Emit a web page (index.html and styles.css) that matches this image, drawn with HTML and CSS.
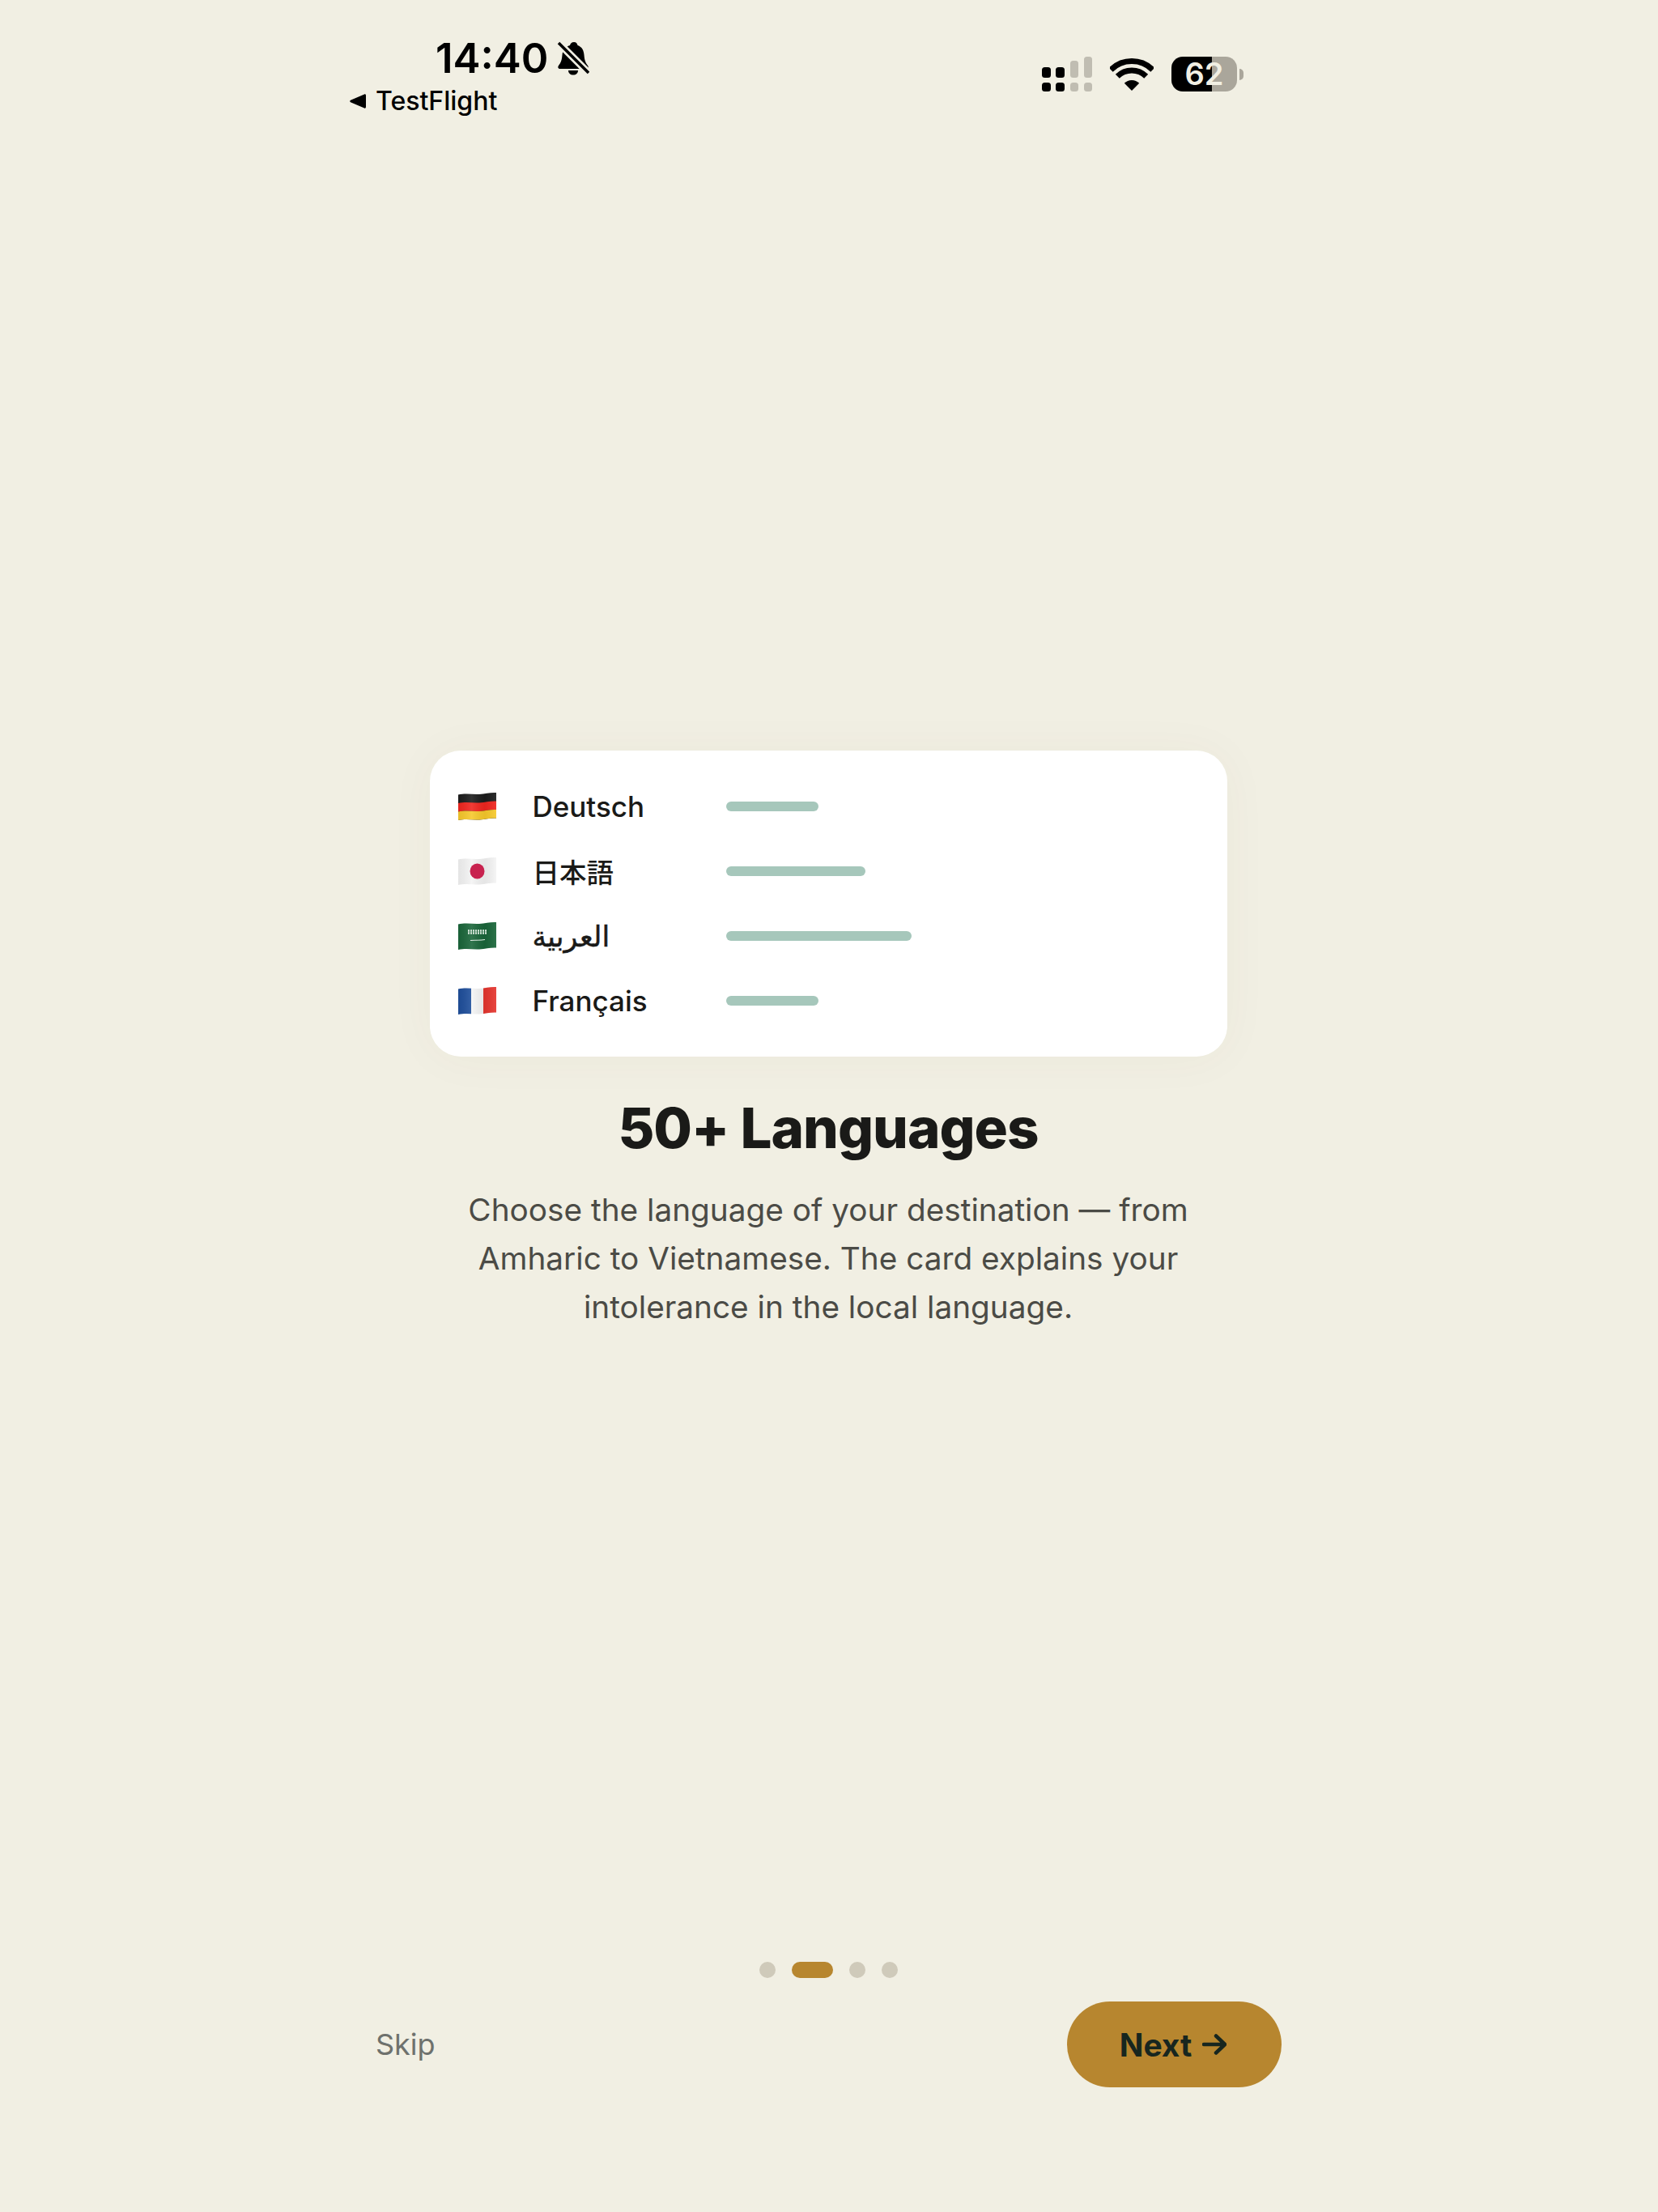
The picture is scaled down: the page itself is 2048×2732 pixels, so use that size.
FILE: index.html
```html
<!DOCTYPE html>
<html>
    <head>
        <meta charset="utf-8">
        <link rel="stylesheet" href="styles.css">
    </head>
    <body>
        <svg class="defs" width="0" height="0">
            <defs>
                <clipPath id="flag-wave">
                    <path d="M0 3.500C10 1.500 18 3.500 26 3S40 .5 47 1V32.500C40 32 34 34 26 34.500C18 35 10 33 0 35Z"/>
                </clipPath>
                <linearGradient id="flag-shade" x1="0" x2="1" y1="0" y2="0">
                    <stop offset="0" stop-color="#000" stop-opacity=".06"/>
                    <stop offset=".35" stop-color="#fff" stop-opacity=".1"/>
                    <stop offset=".7" stop-color="#000" stop-opacity=".06"/>
                    <stop offset="1" stop-color="#fff" stop-opacity=".08"/>
                </linearGradient>
            </defs>
        </svg>

        <div class="status-bar">
            <div class="status-left">
                <div class="time-row">
                    <span class="time">14:40</span>
                    <svg class="bell" viewBox="0 0 40 42">
                        <path d="M21 1C24 1 25 3 25.500 5C31 7 33 11 33.500 17C34 23 35 26 38 30C39.500 32 38.500 34 36 34H4C1.500 34 .5 32 2 30C5 26 6 23 6.500 17C7 11 10 7 16 5C16.500 3 18 1 21 1Z"/>
                        <path d="M14 36H26C26 39.500 23.500 41.500 20 41.500S14 39.500 14 36Z"/>
                        <path class="bell-gap" d="M1 1L39 39"/>
                        <path class="bell-slash" d="M2 2L39 39"/>
                    </svg>
                </div>
                <div class="back-row">
                    <svg class="back-arrow" viewBox="0 0 20 20"><path d="M18 1.500C19 1 20 1.500 20 3V17C20 18.500 19 19 18 18.500L1 11.200C0 10.700 0 9.300 1 8.800Z"/></svg>
                    <span>TestFlight</span>
                </div>
            </div>
            <div class="status-right">
                <svg class="signal" viewBox="0 0 62 43">
                    <rect x="0" y="13" width="11" height="13" rx="3.500"/>
                    <rect x="17" y="13" width="11" height="13" rx="3.500"/>
                    <rect class="off" x="35" y="5" width="10" height="21" rx="3.500"/>
                    <rect class="off" x="52" y="0" width="10" height="26" rx="3.500"/>
                    <rect x="0" y="32" width="11" height="11" rx="3.500"/>
                    <rect x="17" y="32" width="11" height="11" rx="3.500"/>
                    <rect class="off" x="35" y="32" width="10" height="11" rx="3.500"/>
                    <rect class="off" x="52" y="32" width="10" height="11" rx="3.500"/>
                </svg>
                <svg class="wifi" viewBox="0 0 54 40">
                    <path class="wifi-ring" d="M1.200 14.200A36.500 36.500 0 0 1 52.800 14.200"/>
                    <path class="wifi-ring" d="M9.300 22.300A25 25 0 0 1 44.700 22.300"/>
                    <path d="M27 40L17.800 30.800A13 13 0 0 1 36.200 30.800Z"/>
                </svg>
                <div class="battery">
                    <div class="battery-body">62</div>
                    <div class="battery-nub"></div>
                </div>
            </div>
        </div>

        <div class="content">
            <div class="lang-card">
                <div class="lang-row">
                    <svg class="flag" viewBox="0 0 47 36">
                        <g clip-path="url(#flag-wave)">
                            <rect width="47" height="36" fill="#1c1c1c"/>
                            <path fill="#f0261f" d="M0 14C10 12 18 14 26 13.500S40 11 47 11.500V22C40 21.500 34 23.500 26 24C18 24.500 10 22.500 0 24.500Z"/>
                            <path fill="#f7c92c" d="M0 24.500C10 22.500 18 24.500 26 24S40 21.500 47 22V36H0Z"/>
                            <rect width="47" height="36" fill="url(#flag-shade)"/>
                        </g>
                    </svg>
                    <span class="lang-name">Deutsch</span>
                    <div class="lang-bar bar-short"></div>
                </div>
                <div class="lang-row">
                    <svg class="flag" viewBox="0 0 47 36">
                        <g clip-path="url(#flag-wave)">
                            <rect width="47" height="36" fill="#f4f4f4"/>
                            <rect width="47" height="36" fill="url(#flag-shade)"/>
                            <ellipse cx="23.500" cy="18" rx="9" ry="9.500" fill="#c8224f"/>
                        </g>
                    </svg>
                    <span class="lang-name lang-jp">日本語</span>
                    <div class="lang-bar bar-mid"></div>
                </div>
                <div class="lang-row">
                    <svg class="flag" viewBox="0 0 47 36">
                        <g clip-path="url(#flag-wave)">
                            <rect width="47" height="36" fill="#1a663a"/>
                            <rect width="47" height="36" fill="url(#flag-shade)"/>
                            <path class="flag-script" d="M12 11.500H36M12 14.500H36"/>
                            <path class="flag-sword" d="M15 23.500C22 23 28 23.500 33 22.500"/>
                        </g>
                    </svg>
                    <span class="lang-name lang-ar" dir="rtl">العربية</span>
                    <div class="lang-bar bar-long"></div>
                </div>
                <div class="lang-row">
                    <svg class="flag" viewBox="0 0 47 36">
                        <g clip-path="url(#flag-wave)">
                            <rect width="47" height="36" fill="#f5f5f5"/>
                            <rect width="16" height="36" fill="#1f4f9c"/>
                            <rect x="31" width="16" height="36" fill="#e6362f"/>
                            <rect width="47" height="36" fill="url(#flag-shade)"/>
                        </g>
                    </svg>
                    <span class="lang-name">Français</span>
                    <div class="lang-bar bar-short"></div>
                </div>
            </div>
            <h1 class="title">50+ Languages</h1>
            <p class="desc">Choose the language of your destination — from Amharic to Vietnamese. The card explains your intolerance in the local language.</p>
        </div>

        <div class="dots">
            <div class="dot"></div>
            <div class="dot active"></div>
            <div class="dot"></div>
            <div class="dot"></div>
        </div>

        <div class="footer">
            <span class="skip">Skip</span>
            <div class="next-btn">
                <span>Next</span>
                <svg class="next-arrow" viewBox="0 0 30 26"><path d="M2 13H28M17 2.500L28 13L17 23.500"/></svg>
            </div>
        </div>
    </body>
</html>
```

FILE: styles.css
```css
body, html {
    margin: 0;
    padding: 0;
    height: 100%;
    background-color: #f1efe3;
    color: #1a1a18;
    font-family: 'Inter', 'Noto Sans CJK JP', 'DejaVu Sans', sans-serif;
    overflow: hidden;
}

body {
    display: flex;
    flex-direction: column;
    height: 2732px;
}

.defs {
    display: block;
}

.status-bar {
    display: flex;
    justify-content: space-between;
    height: 160px;
    padding: 43px 512px 0 432px;
    box-sizing: border-box;
    color: #000;
}

.time-row {
    display: flex;
    align-items: center;
    gap: 11px;
    padding-left: 106px;
    height: 58px;
}

.time {
    font-size: 51px;
    font-weight: 600;
    line-height: 58px;
}

.bell {
    width: 40px;
    height: 42px;
    fill: #000;
}

.bell-gap {
    stroke: #f1efe3;
    stroke-width: 9;
}

.bell-slash {
    stroke: #000;
    stroke-width: 3.500;
}

.back-row {
    display: flex;
    align-items: center;
    gap: 12px;
    font-size: 32px;
    font-weight: 500;
    line-height: 40px;
    margin-top: 4px;
}

.back-arrow {
    width: 20px;
    height: 20px;
    fill: #000;
}

.status-right {
    display: flex;
    align-items: flex-start;
    padding-top: 27px;
}

.signal {
    width: 62px;
    height: 43px;
    fill: #000;
}

.signal .off {
    fill: #c0bdb2;
}

.wifi {
    width: 54px;
    height: 40px;
    margin-left: 22px;
    margin-top: 2px;
    fill: #000;
}

.wifi-ring {
    fill: none;
    stroke: #000;
    stroke-width: 7;
}

.battery {
    display: flex;
    align-items: center;
    margin-left: 22px;
}

.battery-body {
    width: 81px;
    height: 43px;
    border-radius: 14px;
    background: linear-gradient(90deg, #000 0, #000 50px, #aaa69b 50px);
    color: #f1efe3;
    font-size: 38px;
    font-weight: 600;
    line-height: 43px;
    text-align: center;
}

.battery-nub {
    width: 5px;
    height: 14px;
    margin-left: 3px;
    border-radius: 0 7px 7px 0;
    background: #aaa69b;
}

.content {
    flex: 1;
    display: flex;
    flex-direction: column;
    align-items: center;
    justify-content: center;
    padding: 0 2px 13px 0;
}

.lang-card {
    width: 985px;
    box-sizing: border-box;
    padding: 47px 35px;
    display: flex;
    flex-direction: column;
    gap: 36px;
    background-color: #fff;
    border-radius: 38px;
    box-shadow: 0 2px 60px rgba(90, 80, 50, 0.04);
}

.lang-row {
    display: flex;
    align-items: center;
    height: 44px;
}

.flag {
    width: 47px;
    height: 36px;
    flex-shrink: 0;
}

.flag-script {
    fill: none;
    stroke: #d6e6da;
    stroke-width: 2.500;
    stroke-dasharray: 2 1;
}

.flag-sword {
    fill: none;
    stroke: #e4efe7;
    stroke-width: 1;
}

.lang-name {
    width: 239px;
    margin-left: 45px;
    font-size: 35px;
    font-weight: 550;
    text-align: left;
}

.lang-jp {
    font-size: 33.500px;
}

.lang-ar {
    font-weight: 500;
    -webkit-text-stroke: 0.5px #1a1a18;
}

.lang-bar {
    height: 12px;
    border-radius: 6px;
    background-color: #a6c7bb;
}

.bar-short {
    width: 114px;
}

.bar-mid {
    width: 172px;
}

.bar-long {
    width: 229px;
}

.title {
    margin: 44px 0 0;
    font-size: 69px;
    font-weight: 800;
    line-height: 88px;
    letter-spacing: -1px;
}

.desc {
    width: 960px;
    margin: 27px 0 0;
    color: #4b4b46;
    font-size: 38.750px;
    line-height: 60px;
    text-align: center;
}

.dots {
    display: flex;
    justify-content: center;
    align-items: center;
    gap: 20px;
    height: 20px;
    margin-bottom: 29px;
    padding-right: 2px;
}

.dot {
    width: 20px;
    height: 20px;
    border-radius: 50%;
    background-color: #cfcaba;
}

.dot.active {
    width: 51px;
    border-radius: 10px;
    background-color: #b7862f;
}

.footer {
    display: flex;
    justify-content: space-between;
    align-items: center;
    padding: 0 465px 154px 464px;
}

.skip {
    color: #6e716d;
    font-size: 36px;
}

.next-btn {
    display: flex;
    justify-content: center;
    align-items: center;
    gap: 13px;
    width: 265px;
    height: 106px;
    padding-right: 3px;
    box-sizing: border-box;
    border-radius: 53px;
    background-color: #b7862f;
    color: #17261f;
    font-size: 39px;
    font-weight: 700;
}

.next-arrow {
    width: 30px;
    height: 26px;
    fill: none;
    stroke: #17261f;
    stroke-width: 4.500;
    stroke-linecap: round;
    stroke-linejoin: round;
}
```
